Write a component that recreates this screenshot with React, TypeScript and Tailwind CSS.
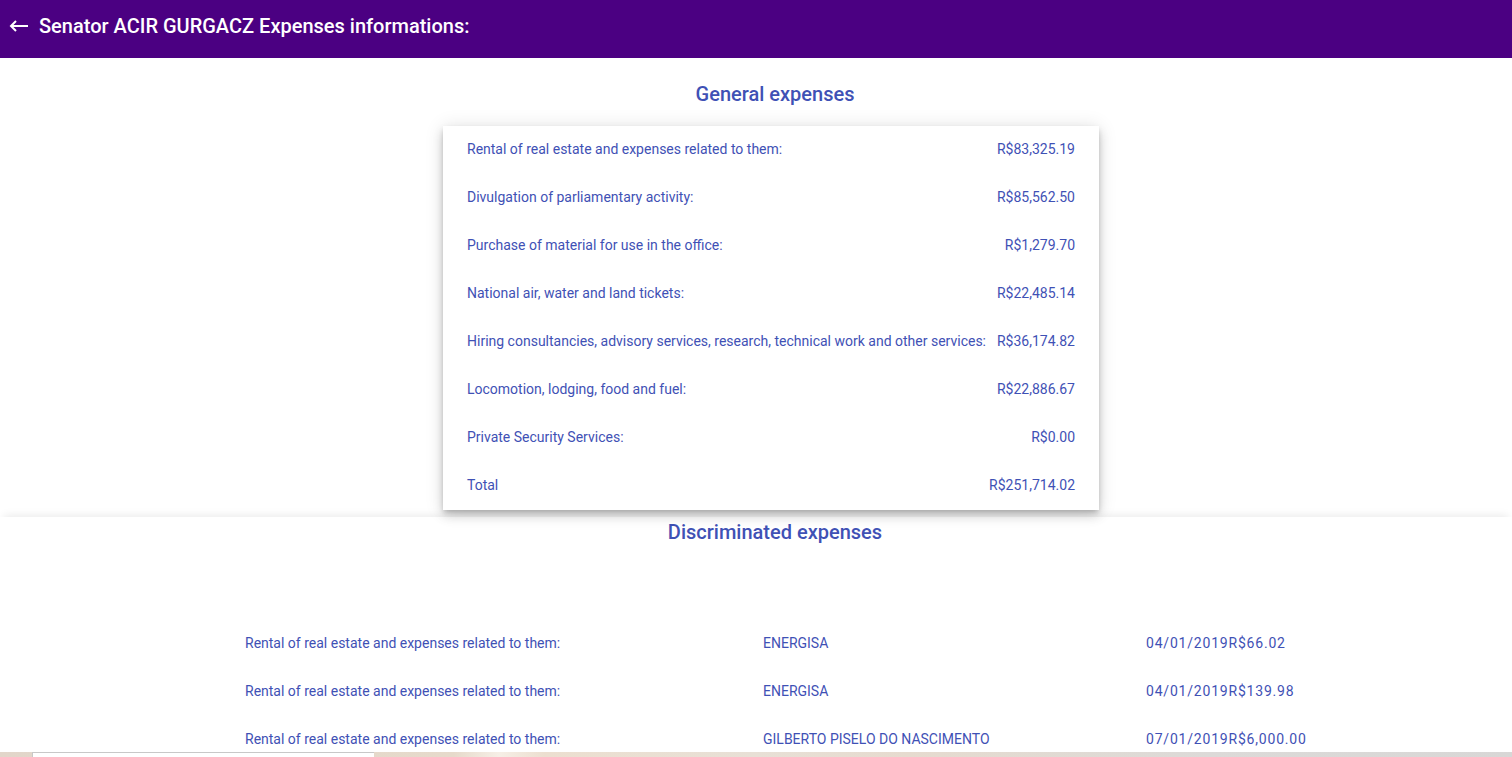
import React from "react";

const general = [
  ["Rental of real estate and expenses related to them:", "R$83,325.19"],
  ["Divulgation of parliamentary activity:", "R$85,562.50"],
  ["Purchase of material for use in the office:", "R$1,279.70"],
  ["National air, water and land tickets:", "R$22,485.14"],
  ["Hiring consultancies, advisory services, research, technical work and other services:", "R$36,174.82"],
  ["Locomotion, lodging, food and fuel:", "R$22,886.67"],
  ["Private Security Services:", "R$0.00"],
  ["Total", "R$251,714.02"],
];

const discriminated = [
  ["Rental of real estate and expenses related to them:", "ENERGISA", "04/01/2019", "R$66.02"],
  ["Rental of real estate and expenses related to them:", "ENERGISA", "04/01/2019", "R$139.98"],
  ["Rental of real estate and expenses related to them:", "GILBERTO PISELO DO NASCIMENTO", "07/01/2019", "R$6,000.00"],
];

const App = () => {
  return (
    <div className="min-h-screen bg-white font-['Roboto',sans-serif] text-[#3f51b5]">
      <header className="flex h-[58px] items-center bg-[#4b0082] pb-[6px] text-white">
        <svg width="20" height="14" viewBox="0 0 20 14" className="ml-[9px]" fill="none" stroke="white" strokeWidth="2">
          <path d="M19 7H2M7 2L2 7l5 5" />
        </svg>
        <h1 className="ml-[10px] text-[20px] font-medium">Senator ACIR GURGACZ Expenses informations:</h1>
      </header>

      <section className="flex flex-col items-center pt-[22px] pb-[7px] pl-[30px]">
        <h2 className="pl-[8px] text-[20px] leading-7 font-medium">General expenses</h2>
        <div className="relative z-10 mt-[18px] w-[656px] bg-white shadow-[0_3px_5px_-1px_rgba(0,0,0,0.2),0_6px_10px_0_rgba(0,0,0,0.14),0_1px_18px_0_rgba(0,0,0,0.12)]">
          {general.map(([label, value]) => (
            <div key={label} className="flex h-12 items-center justify-between px-6 pb-[2px] text-sm">
              <span>{label}</span>
              <span>{value}</span>
            </div>
          ))}
        </div>
      </section>

      <section className="relative shadow-[0_-6px_8px_-4px_rgba(0,0,0,0.08)]">
        <h2 className="pt-[1px] pl-[38px] text-center text-[20px] leading-7 font-medium">Discriminated expenses</h2>
        <div className="mt-[73px] pl-[245px] text-sm">
          {discriminated.map(([type, who, date, value], i) => (
            <div key={i} className="grid h-12 grid-cols-[518px_383px_auto] items-center">
              <span>{type}</span>
              <span>{who}</span>
              <span className="tracking-[0.8px]">
                {date}
                {value}
              </span>
            </div>
          ))}
        </div>
      </section>

      <div className="fixed right-0 bottom-0 left-0 z-20 flex h-[5px] bg-[linear-gradient(to_right,#e2d6ca_0%,#e6dacb_30%,#f6efe6_33%,#ecdfd0_36%,#e8e0d6_50%,#e6dbcf_60%,#dcdad8_80%,#d8d7d6_100%)]">
        <div className="ml-[32px] w-[342px] border-t border-l border-[#c8c8c8] bg-white" />
      </div>
    </div>
  );
};

export default App;
